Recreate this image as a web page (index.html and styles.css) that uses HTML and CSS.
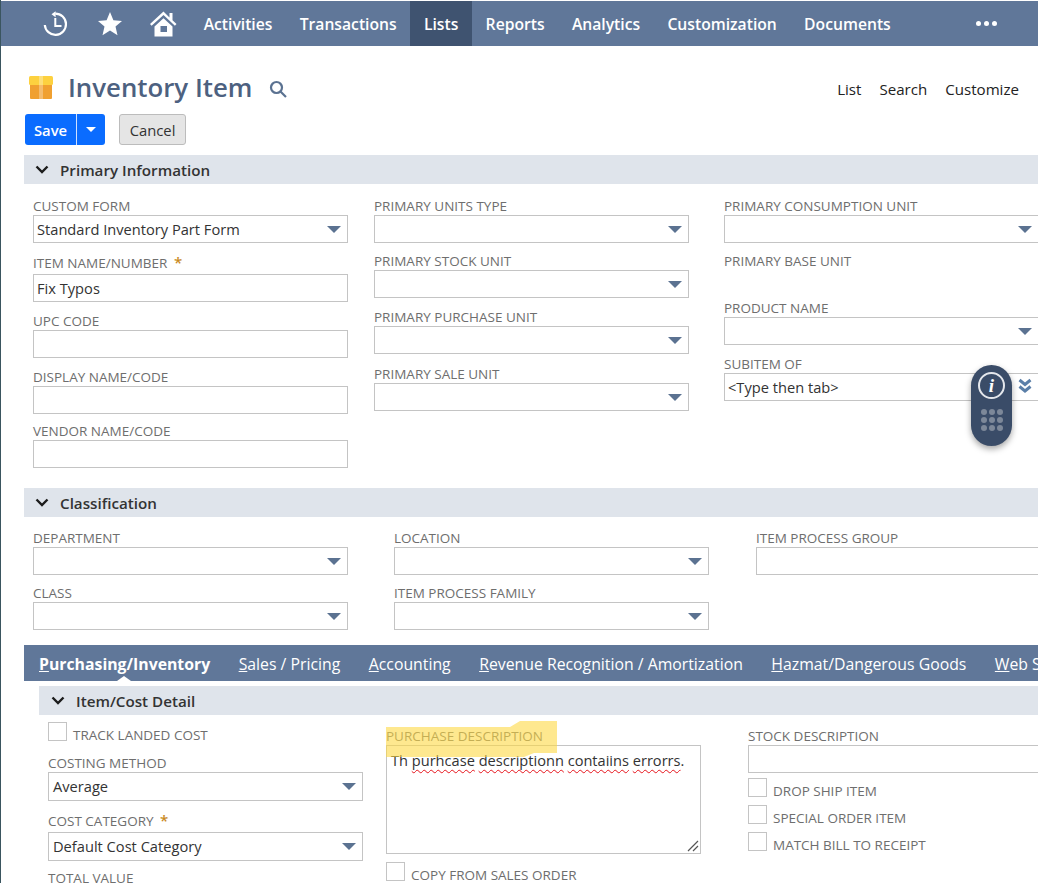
FILE: index.html
```html
<!DOCTYPE html>
<html lang="en">
<head>
    <meta charset="UTF-8">
    <title>Inventory Item</title>
    <link rel="stylesheet" href="styles.css">
</head>
<body>
    <nav class="topnav">
        <div class="nav-icons">
            <svg class="nav-icon" width="26" height="26" viewBox="0 0 26 26" fill="none" stroke="#fff" stroke-width="2.200"><path d="M12.300 2.600A10.600 10.600 0 1 1 1.800 14"/><path d="M8.500 3.200L12.600.2v6z" fill="#fff" stroke="none"/><path d="M12.300 7v8h6.200" stroke-width="2"/></svg>
            <svg class="nav-icon" width="26" height="26" viewBox="0 0 26 26" fill="#fff"><path d="M13 1l3.4 8.2 8.6.7-6.5 5.7 2 8.6-7.5-4.6-7.500 4.600 2-8.600L1 9.900l8.600-.700z"/></svg>
            <svg class="nav-icon home-icon" width="28" height="26" viewBox="0 0 28 26" fill="#fff"><path d="M13.500 .5L0 13l1.600 1.700L13.500 4l11.400 10.700L26.500 13l-4-3.700V2h-3v4.500z"/><path d="M4.500 15.500L13.500 7.300l9 8.200V25.500h-18zM10.500 15v6H17v-6z" fill-rule="evenodd"/></svg>
        </div>
        <a href="#" class="nav-link">Activities</a>
        <a href="#" class="nav-link">Transactions</a>
        <a href="#" class="nav-link active">Lists</a>
        <a href="#" class="nav-link">Reports</a>
        <a href="#" class="nav-link">Analytics</a>
        <a href="#" class="nav-link">Customization</a>
        <a href="#" class="nav-link">Documents</a>
        <div class="nav-more"><span></span><span></span><span></span></div>
    </nav>

    <div class="title-row">
        <svg class="title-icon" width="26" height="25" viewBox="0 0 26 25"><rect x="2" y="8" width="22" height="16" rx="1" fill="#f0a030"/><rect x="1" y="1" width="24" height="9" rx="1.500" fill="#fdd13f"/><rect x="11" y="1" width="4" height="23" fill="#fff" opacity=".3"/></svg>
        <h1>Inventory Item</h1>
        <svg class="title-search" width="18" height="18" viewBox="0 0 18 18" fill="none" stroke="#5b7291" stroke-width="2.200"><circle cx="7.500" cy="7.500" r="5.500"/><path d="M11.500 11.500L17 17"/></svg>
        <div class="title-links">
            <a href="#">List</a>
            <a href="#">Search</a>
            <a href="#">Customize</a>
        </div>
    </div>

    <div class="buttons">
        <div class="save-btn">
            <span class="save-label">Save</span>
            <span class="save-arrow"><i></i></span>
        </div>
        <button class="cancel-btn">Cancel</button>
    </div>

    <div class="section-head">
        <svg class="chevron" width="14" height="9" viewBox="0 0 14 9" fill="none" stroke="#1c1c1c" stroke-width="2.400"><path d="M1.500 1.500L7 7l5.500-5.500"/></svg>
        Primary Information
    </div>
    <div class="primary-grid">
        <div class="col">
            <div class="field f-59"><label>CUSTOM FORM</label><div class="input select">Standard Inventory Part Form</div></div>
            <div class="field f-56"><label class="label-req">ITEM NAME/NUMBER <b class="req">*</b></label><div class="input">Fix Typos</div></div>
            <div class="field f-56"><label>UPC CODE</label><div class="input"></div></div>
            <div class="field f-54"><label>DISPLAY NAME/CODE</label><div class="input"></div></div>
            <div class="field"><label>VENDOR NAME/CODE</label><div class="input"></div></div>
        </div>
        <div class="col">
            <div class="field f-55"><label>PRIMARY UNITS TYPE</label><div class="input select"></div></div>
            <div class="field f-56"><label>PRIMARY STOCK UNIT</label><div class="input select"></div></div>
            <div class="field f-57"><label>PRIMARY PURCHASE UNIT</label><div class="input select"></div></div>
            <div class="field"><label>PRIMARY SALE UNIT</label><div class="input select"></div></div>
        </div>
        <div class="col">
            <div class="field f-55"><label>PRIMARY CONSUMPTION UNIT</label><div class="input select"></div></div>
            <div class="field base-unit"><label>PRIMARY BASE UNIT</label></div>
            <div class="field f-56"><label>PRODUCT NAME</label><div class="input select"></div></div>
            <div class="field"><label>SUBITEM OF</label><div class="input">&lt;Type then tab&gt;</div></div>
        </div>
    </div>

    <div class="section-head">
        <svg class="chevron" width="14" height="9" viewBox="0 0 14 9" fill="none" stroke="#1c1c1c" stroke-width="2.400"><path d="M1.500 1.500L7 7l5.500-5.500"/></svg>
        Classification
    </div>
    <div class="class-grid">
        <div class="col">
            <div class="field f-55"><label>DEPARTMENT</label><div class="input select"></div></div>
            <div class="field"><label>CLASS</label><div class="input select"></div></div>
        </div>
        <div class="col">
            <div class="field f-55"><label>LOCATION</label><div class="input select"></div></div>
            <div class="field"><label>ITEM PROCESS FAMILY</label><div class="input select"></div></div>
        </div>
        <div class="col">
            <div class="field"><label>ITEM PROCESS GROUP</label><div class="input"></div></div>
        </div>
    </div>

    <div class="tabs">
        <a href="#" class="tab active"><u>P</u>urchasing/Inventory</a>
        <a href="#" class="tab"><u>S</u>ales / Pricing</a>
        <a href="#" class="tab"><u>A</u>ccounting</a>
        <a href="#" class="tab"><u>R</u>evenue Recognition / Amortization</a>
        <a href="#" class="tab"><u>H</u>azmat/Dangerous Goods</a>
        <a href="#" class="tab"><u>W</u>eb Store</a>
    </div>

    <div class="section-head sub-head">
        <svg class="chevron" width="14" height="9" viewBox="0 0 14 9" fill="none" stroke="#1c1c1c" stroke-width="2.400"><path d="M1.500 1.500L7 7l5.500-5.500"/></svg>
        Item/Cost Detail
    </div>
    <div class="detail-grid">
        <div class="col">
            <div class="check check-first"><span class="box"></span><span class="check-label">TRACK LANDED COST</span></div>
            <div class="field f-60"><label>COSTING METHOD</label><div class="input select">Average</div></div>
            <div class="field f-55"><label class="label-req">COST CATEGORY <b class="req">*</b></label><div class="input select">Default Cost Category</div></div>
            <div class="field"><label>TOTAL VALUE</label></div>
        </div>
        <div class="col">
            <div class="field desc">
                <label>PURCHASE DESCRIPTION</label>
                <div class="textarea">Th <span class="typo">purhcase</span> <span class="typo">descriptionn</span> <span class="typo">contaiins</span> <span class="typo">errorrs</span>.
                    <svg class="resize" width="12" height="12" viewBox="0 0 12 12" stroke="#555" stroke-width="1.200"><path d="M1 11L11 1M6 11l5-5"/></svg>
                </div>
                <span class="highlight"></span>
            </div>
            <div class="check"><span class="box"></span><span class="check-label">COPY FROM SALES ORDER</span></div>
        </div>
        <div class="col third">
            <div class="field stock"><label>STOCK DESCRIPTION</label><div class="input"></div></div>
            <div class="check check-tight"><span class="box"></span><span class="check-label">DROP SHIP ITEM</span></div>
            <div class="check check-tight"><span class="box"></span><span class="check-label">SPECIAL ORDER ITEM</span></div>
            <div class="check check-tight"><span class="box"></span><span class="check-label">MATCH BILL TO RECEIPT</span></div>
        </div>
    </div>

    <!-- floating help widget -->
    <div class="widget">
        <span class="widget-info">i</span>
        <div class="widget-dots">
            <span></span><span></span><span></span>
            <span></span><span></span><span></span>
            <span></span><span></span><span></span>
        </div>
    </div>
    <svg class="double-chevron" width="14" height="15" viewBox="0 0 14 15" fill="none" stroke="#5b7fa8" stroke-width="3"><path d="M1.500 2L7 6.500 12.500 2M1.500 8.500L7 13l5.500-4.500"/></svg>
</body>
</html>
```

FILE: styles.css
```css
html, body {
    height: 883px;
    overflow: hidden;
}

body {
    position: relative;
    margin: 0;
    padding: 1px 0 0 0;
    border-left: 1px solid #3a555f;
    box-sizing: border-box;
    width: 1038px;
    background-color: #fff;
    font-family: "Open Sans", sans-serif;
    font-size: 14px;
    color: #333;
}

a {
    text-decoration: none;
    color: inherit;
}

.topnav {
    display: flex;
    align-items: center;
    height: 45px;
    background-color: #607799;
    width: 1037px;
}

.nav-icons {
    display: flex;
    align-items: center;
    width: 189px;
    padding-left: 42px;
    gap: 28px;
    box-sizing: border-box;
}

.nav-icon {
    flex: none;
}

.home-icon {
    margin-left: -1px;
}

.nav-link {
    display: flex;
    align-items: center;
    height: 45px;
    padding: 0 13.650px;
    color: #fff;
    font-size: 15.700px;
    font-weight: 600;
}

.nav-link.active {
    background-color: #3f5370;
}

.nav-more {
    display: flex;
    gap: 3px;
    margin-left: 72px;
}

.nav-more span {
    width: 5px;
    height: 5px;
    border-radius: 50%;
    background-color: #fff;
}

.title-row {
    display: flex;
    align-items: center;
    height: 36px;
    margin-top: 23px;
    padding-left: 27px;
}

.title-icon {
    flex: none;
}

h1 {
    margin: 0 0 0 14px;
    font-size: 25.800px;
    font-weight: 600;
    color: #4d6180;
}

.title-search {
    margin-left: 17px;
    margin-top: 3px;
}

.title-links {
    display: flex;
    gap: 18px;
    margin-left: auto;
    padding-top: 3px;
    padding-right: 19px;
    font-size: 15.100px;
    color: #222;
}

.buttons {
    display: flex;
    gap: 14px;
    margin-top: 9px;
    padding-left: 24px;
}

.save-btn {
    display: flex;
    height: 31px;
    border-radius: 3px;
    background-color: #0a6cff;
    color: #fff;
    font-weight: 600;
    overflow: hidden;
}

.save-label {
    display: flex;
    align-items: center;
    width: 51px;
    justify-content: center;
    border-right: 1px solid #cfe0ff;
    font-size: 14.800px;
}

.save-arrow {
    display: flex;
    align-items: center;
    justify-content: center;
    width: 28px;
}

.save-arrow i {
    width: 0;
    height: 0;
    border-left: 5px solid transparent;
    border-right: 5px solid transparent;
    border-top: 5px solid #fff;
}

.cancel-btn {
    width: 67px;
    height: 31px;
    padding: 0;
    background-color: #e5e5e5;
    border: 1px solid #bcbcbc;
    border-radius: 3px;
    font-family: inherit;
    font-size: 14.800px;
    color: #333;
}

.section-head {
    display: flex;
    align-items: center;
    gap: 11px;
    height: 29px;
    margin-top: 9px;
    margin-left: 23px;
    padding-left: 11px;
    background-color: #dfe4eb;
    font-size: 15.200px;
    font-weight: 600;
    color: #333;
}

.buttons + .section-head {
    margin-top: 10px;
}

.col {
    min-width: 0;
}

.primary-grid {
    display: grid;
    grid-template-columns: 315px 315px 315px;
    column-gap: 26px;
    margin-top: 13px;
    padding-left: 32px;
    height: 282px;
}

.primary-grid .col:nth-child(3) {
    margin-left: 9px;
    margin-right: -9px;
}

.class-grid {
    display: grid;
    grid-template-columns: 315px 315px 315px;
    column-gap: 46px;
    margin-top: 12px;
    padding-left: 32px;
    height: 116px;
}

.class-grid .col:nth-child(3) {
    margin-left: 1px;
}

.field {
    position: relative;
    display: flow-root;
}

.field label {
    display: block;
    height: 18px;
    line-height: 19px;
    font-size: 13.500px;
    color: #6e6e6e;
    white-space: nowrap;
}

.field .label-req {
    height: 20px;
    margin-top: -2px;
}

.f-54 { height: 54px; }
.f-55 { height: 55px; }
.f-56 { height: 56px; }
.f-57 { height: 57px; }
.f-59 { height: 59px; }
.f-60 { height: 60px; }

.base-unit {
    height: 47px;
}

.req {
    margin-left: 3px;
    line-height: 0;
    font-weight: 600;
    font-size: 15px;
    color: #c98a1e;
}

.input {
    position: relative;
    box-sizing: border-box;
    height: 28px;
    line-height: 26px;
    padding-left: 3px;
    border: 1px solid #c4c4c4;
    background-color: #fff;
    font-size: 14.650px;
    color: #333;
}

.select::after {
    content: "";
    position: absolute;
    right: 6px;
    top: 10px;
    width: 0;
    height: 0;
    border-left: 7px solid transparent;
    border-right: 7px solid transparent;
    border-top: 7px solid #5b7291;
}

.tabs {
    display: flex;
    align-items: center;
    gap: 28.500px;
    box-sizing: border-box;
    height: 36px;
    margin-left: 23px;
    padding: 2px 0 0 15px;
    background-color: #607799;
    color: #fff;
    font-size: 15.800px;
    white-space: nowrap;
    overflow: hidden;
}

.tab {
    position: relative;
    line-height: 36px;
}

.tab.active {
    font-weight: 700;
}

.tab.active::after {
    content: "";
    position: absolute;
    left: 78px;
    bottom: 1px;
    width: 0;
    height: 0;
    border-left: 7px solid transparent;
    border-right: 7px solid transparent;
    border-bottom: 5px solid #fff;
}

.sub-head {
    margin-top: 5px;
    margin-left: 38px;
    padding-left: 12px;
}

.detail-grid {
    display: grid;
    grid-template-columns: 315px 315px 315px;
    column-gap: 23px;
    margin-top: 7px;
    padding-left: 47px;
}

.detail-grid .select {
    height: 29px;
    line-height: 27px;
    padding-left: 4px;
}

.third {
    margin-left: 24px;
}

.check {
    display: flex;
    align-items: flex-end;
    gap: 6px;
    height: 19px;
}

.check-first {
    margin-bottom: 13px;
}

.check-tight {
    margin-bottom: 8px;
}

.box {
    box-sizing: border-box;
    flex: none;
    width: 19px;
    height: 19px;
    border: 1px solid #c4c4c4;
    background-color: #fff;
}

.check-label {
    position: relative;
    top: 2px;
    font-size: 13.500px;
    line-height: 16px;
    color: #6e6e6e;
    white-space: nowrap;
}

.desc {
    height: 127px;
    margin-top: 5px;
    margin-bottom: 8px;
}

.highlight {
    position: absolute;
    left: 0;
    top: -6px;
    width: 171px;
    height: 36px;
    background-color: rgba(253, 217, 68, 0.6);
    clip-path: polygon(0 6px, 124px 6px, 134px 0, 171px 0, 171px 32px, 148px 32px, 138px 36px, 0 36px);
}

.textarea {
    position: relative;
    box-sizing: border-box;
    width: 315px;
    height: 109px;
    padding: 0 4px;
    border: 1px solid #c4c4c4;
    line-height: 28px;
    font-size: 14.600px;
    color: #333;
}

.typo {
    text-decoration: underline wavy #e6141c 1px;
    text-underline-offset: 3px;
}

.resize {
    position: absolute;
    right: 1px;
    bottom: 1px;
}

.stock {
    height: 51px;
    margin-top: 5px;
}

.widget {
    position: absolute;
    left: 970px;
    top: 365px;
    box-sizing: border-box;
    width: 41px;
    height: 81px;
    padding-top: 7px;
    border-radius: 21px;
    background-color: #3a4c68;
    box-shadow: 0 3px 6px rgba(0, 0, 0, 0.35);
}

.widget-info {
    display: block;
    box-sizing: border-box;
    width: 27px;
    height: 27px;
    margin: 0 auto;
    border: 2px solid #e4e7ec;
    border-radius: 50%;
    text-align: center;
    line-height: 23px;
    font-family: "Liberation Serif", serif;
    font-style: italic;
    font-weight: 700;
    font-size: 19px;
    color: #fff;
}

.widget-dots {
    display: grid;
    grid-template-columns: repeat(3, 6px);
    gap: 2px;
    justify-content: center;
    margin-top: 10px;
}

.widget-dots span {
    width: 6px;
    height: 6px;
    border-radius: 50%;
    background-color: #7d8899;
}

.double-chevron {
    position: absolute;
    left: 1017px;
    top: 378px;
}
```
